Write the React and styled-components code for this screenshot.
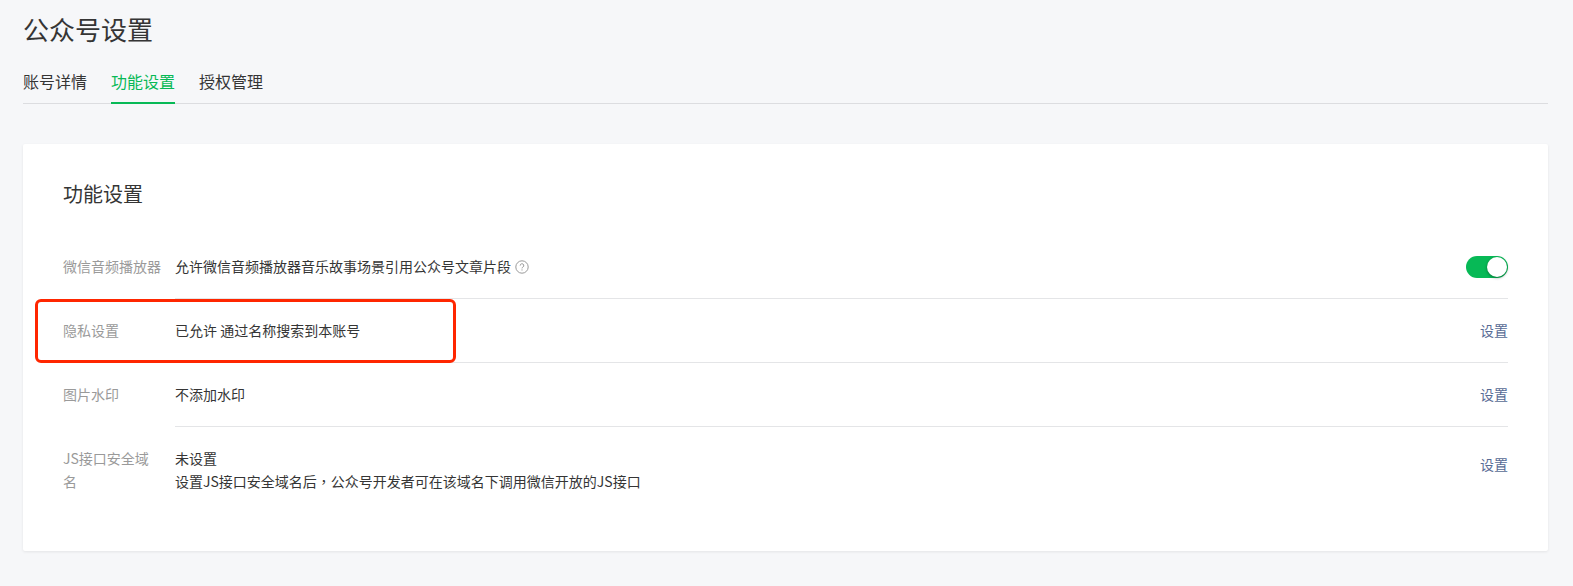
import React, { useState } from "react";
import styled, { createGlobalStyle } from "styled-components";

const GlobalStyle = createGlobalStyle`
  * {
    box-sizing: border-box;
  }
  body {
    margin: 0;
    background: #f6f7f9;
    color: #353535;
    font-family: "Noto Sans CJK SC", sans-serif;
    font-size: 14px;
    line-height: 23px;
  }
`;

const Page = styled.main`
  padding: 11px 25px 35px 23px;
`;

const PageTitle = styled.h1`
  margin: 0;
  font-size: 26px;
  line-height: 36px;
  font-weight: 400;
`;

const Tabs = styled.nav`
  display: flex;
  gap: 24px;
  margin-top: 21px;
  border-bottom: 1px solid #dcdde0;
`;

const Tab = styled.a`
  margin-bottom: -1px;
  padding-bottom: 8px;
  border-bottom: 2px solid ${({ $active }) => ($active ? "#07b956" : "transparent")};
  color: ${({ $active }) => ($active ? "#07b956" : "#353535")};
  font-size: 16px;
  line-height: 26px;
  text-decoration: none;
`;

const Card = styled.section`
  margin-top: 40px;
  padding: 35px 40px 50px;
  border-radius: 2px;
  background: #fff;
  box-shadow: 0 1px 3px rgba(0, 0, 0, 0.08);
`;

const CardTitle = styled.h2`
  margin: 0 0 26px;
  font-size: 20px;
  line-height: 30px;
  font-weight: 400;
`;

const Row = styled.div`
  position: relative;
  display: flex;
`;

const RowLabel = styled.div`
  flex: 0 0 112px;
  padding: 20px 14px 0 0;
  color: #9a9a9a;
`;

const RowBody = styled.div`
  flex: 1;
  display: flex;
  align-items: center;
  justify-content: space-between;
  border-bottom: 1px solid #e4e5e7;

  ${Row}:last-child & {
    border-bottom: none;
  }
`;

const RowContent = styled.div`
  padding: 20px 0;

  ${Row}:last-child & {
    padding-bottom: 8px;
  }
`;

const RowText = styled.p`
  margin: 0;
`;

// centred comma
const Comma = styled.span`
  display: inline-block;
  font-family: "Noto Sans CJK TC", sans-serif;
`;

const SettingLink = styled.a`
  color: #576b95;
  text-decoration: none;
`;

const HelpIcon = styled.svg`
  margin-left: 4px;
  vertical-align: -2px;
`;

const Switch = styled.input`
  appearance: none;
  width: 42px;
  height: 22px;
  margin: 0;
  border-radius: 11px;
  background: ${({ checked }) => (checked ? "#07b956" : "#dcdde0")};
  cursor: pointer;

  &::before {
    content: "";
    display: block;
    width: 20px;
    height: 20px;
    margin: 1px;
    margin-left: ${({ checked }) => (checked ? "21px" : "1px")};
    border-radius: 50%;
    background: #fff;
    box-shadow: 0 1px 3px rgba(0, 0, 0, 0.4);
  }
`;

const Highlight = styled.div`
  position: absolute;
  top: 0;
  bottom: 0;
  left: -28px;
  width: 421px;
  border: 3px solid #ff2600;
  border-radius: 6px;
  pointer-events: none;
`;

const tabs = ["账号详情", "功能设置", "授权管理"];

const Help = () => (
  <HelpIcon width="14" height="14" viewBox="0 0 14 14" fill="none" stroke="#9a9a9a">
    <circle cx="7" cy="7" r="6.2" />
    <path d="M5.2 5.6a1.8 1.8 0 1 1 2.7 1.5c-.6.4-.9.6-.9 1.3" />
    <path d="M7 9.4v1.1" />
  </HelpIcon>
);

const App = () => {
  const [audio, setAudio] = useState(true);

  return (
    <>
      <GlobalStyle />
      <Page lang="zh-CN">
        <PageTitle>公众号设置</PageTitle>
        <Tabs>
          {tabs.map((tab) => (
            <Tab key={tab} href="#" $active={tab === "功能设置"}>
              {tab}
            </Tab>
          ))}
        </Tabs>
        <Card>
          <CardTitle>功能设置</CardTitle>
          <div>
            <Row>
              <RowLabel as="label" htmlFor="audio">
                微信音频播放器
              </RowLabel>
              <RowBody>
                <RowContent>
                  <RowText>
                    允许微信音频播放器音乐故事场景引用公众号文章片段
                    <Help />
                  </RowText>
                </RowContent>
                <Switch
                  id="audio"
                  type="checkbox"
                  checked={audio}
                  onChange={(e) => setAudio(e.target.checked)}
                />
              </RowBody>
            </Row>
            <Row>
              <RowLabel>隐私设置</RowLabel>
              <RowBody>
                <RowContent>
                  <RowText>已允许 通过名称搜索到本账号</RowText>
                </RowContent>
                <SettingLink href="#">设置</SettingLink>
              </RowBody>
              <Highlight />
            </Row>
            <Row>
              <RowLabel>图片水印</RowLabel>
              <RowBody>
                <RowContent>
                  <RowText>不添加水印</RowText>
                </RowContent>
                <SettingLink href="#">设置</SettingLink>
              </RowBody>
            </Row>
            <Row>
              <RowLabel>JS接口安全域名</RowLabel>
              <RowBody>
                <RowContent>
                  <RowText>未设置</RowText>
                  <RowText>
                    设置JS接口安全域名后<Comma lang="zh-TW">，</Comma>公众号开发者可在该域名下调用微信开放的JS接口
                  </RowText>
                </RowContent>
                <SettingLink href="#">设置</SettingLink>
              </RowBody>
            </Row>
          </div>
        </Card>
      </Page>
    </>
  );
};

export default App;
